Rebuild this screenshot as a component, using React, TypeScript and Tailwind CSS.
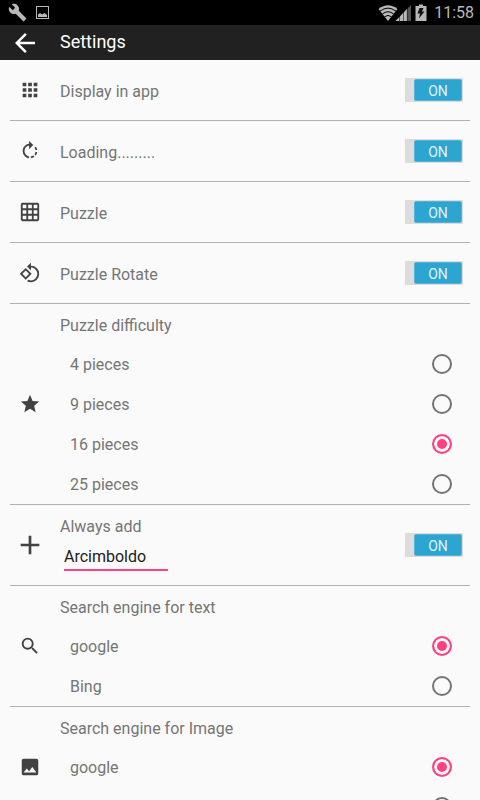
import { useState, type ReactNode } from "react";
import {
  MdAdd,
  MdApps,
  MdArrowBack,
  MdBuild,
  MdGridOn,
  MdImage,
  MdRotate90DegreesCcw,
  MdRotateRight,
  MdSearch,
  MdStar,
} from "react-icons/md";

function StatusBar() {
  return (
    <div className="flex h-[25px] shrink-0 items-center justify-between bg-black pl-2 pr-1.5 text-[#b8b8b8]">
      <div className="flex items-center gap-2">
        <MdBuild size={19} />
        <svg width="15" height="15" viewBox="0 0 15 15" aria-hidden="true">
          <rect x="1.5" y="1.5" width="12" height="12" fill="none" stroke="currentColor" />
          <path d="M3 12V9.500l2-1.500L7 9.500 9.500 8 12 10v2z" fill="currentColor" />
        </svg>
      </div>
      <div className="flex items-center gap-1.5">
        <svg width="50" height="18" viewBox="0 0 50 18" aria-hidden="true">
          <path d="M10 17 .5 5Q10-2.500 19.500 5z" fill="currentColor" />
          <g fill="none" stroke="#000" strokeWidth="1">
            <path d="M2 7.200Q10 1 18 7.200M4.300 10Q10 5.500 15.700 10M6.500 12.800Q10 10 13.500 12.800" />
          </g>
          <path d="M33 1v16H17.500z" fill="#555" />
          <path d="M29 5v12H17.500z" fill="currentColor" />
          <path d="M21.500 10v7M25.500 6v11M29.300 3v14" stroke="#000" strokeWidth=".5" />
          <path d="M41 .5h4V2h3.500v15h-11V2H41z" fill="currentColor" />
          <path d="M41.500 4h4l-1.500 3.500h2.500L41 14.500l1-5h-2.500z" fill="#111" />
        </svg>
        <span className="text-base leading-6">11:58</span>
      </div>
    </div>
  );
}

function Row({ icon, children }: { icon: ReactNode; children: ReactNode }) {
  return (
    <section className="mx-2.5 flex items-center border-b border-[#b2b2b2]">
      <div className="flex w-10 shrink-0 justify-center text-[#424242]">{icon}</div>
      <div className="min-w-0 flex-1 pl-2.5">{children}</div>
    </section>
  );
}

function Toggle({ label }: { label: string }) {
  const [on, setOn] = useState(true);
  return (
    <button
      type="button"
      role="switch"
      aria-checked={on}
      aria-label={label}
      onClick={() => setOn(!on)}
      className={`mr-[7px] flex h-6 w-[58px] shrink-0 bg-[#dcdcdc] p-px ${on ? "justify-end" : "justify-start"}`}
    >
      <span
        className={`flex h-[22px] w-12 items-center justify-center rounded-xs border pt-0.5 text-sm leading-5 ${
          on ? "border-[#55b4d5] bg-[#2ca5d0] text-[#e3f3f9]" : "border-[#999] bg-[#888] text-white"
        }`}
      >
        {on ? "ON" : "OFF"}
      </span>
    </button>
  );
}

function ToggleRow({ icon, label }: { icon: ReactNode; label: string }) {
  return (
    <Row icon={icon}>
      <div className="flex h-[60px] items-center justify-between">
        <span className="pt-1">{label}</span>
        <Toggle label={label} />
      </div>
    </Row>
  );
}

type ChoiceRowProps = {
  icon: ReactNode;
  title: string;
  name: string;
  options: string[];
  initial: string;
};

function ChoiceRow({ icon, title, name, options, initial }: ChoiceRowProps) {
  const [value, setValue] = useState(initial);
  return (
    <Row icon={icon}>
      <h2 className="h-10 pt-2.5">{title}</h2>
      <div role="radiogroup" aria-label={title}>
        {options.map((option) => (
          <label key={option} className="flex h-10 items-center justify-between pl-2.5 pr-[18px]">
            <span className="pt-0.5">{option}</span>
            <input
              type="radio"
              name={name}
              checked={value === option}
              onChange={() => setValue(option)}
              className="size-5 appearance-none rounded-full border-2 border-[#737373] checked:border-[#ff4081] checked:bg-[#ff4081] checked:shadow-[inset_0_0_0_3px_#fafafa]"
            />
          </label>
        ))}
      </div>
    </Row>
  );
}

export default function App() {
  const [word, setWord] = useState("Arcimboldo");
  return (
    <div className="flex h-screen flex-col bg-[#fafafa] font-[Roboto,sans-serif] text-base leading-6 text-[#757575]">
      <StatusBar />
      <header className="flex h-[35px] shrink-0 items-center bg-[#212121] text-white">
        <button type="button" aria-label="Back" className="flex w-[50px] justify-center">
          <MdArrowBack size={30} />
        </button>
        <h1 className="pb-0.5 pl-2.5 text-lg leading-6">Settings</h1>
      </header>
      <main className="flex-1 overflow-y-auto [scrollbar-width:none]">
        <ToggleRow icon={<MdApps size={22} />} label="Display in app" />
        <ToggleRow icon={<MdRotateRight size={22} />} label="Loading........." />
        <ToggleRow icon={<MdGridOn size={22} />} label="Puzzle" />
        <ToggleRow icon={<MdRotate90DegreesCcw size={22} />} label="Puzzle Rotate" />
        <ChoiceRow
          icon={<MdStar size={22} />}
          title="Puzzle difficulty"
          name="difficulty"
          options={["4 pieces", "9 pieces", "16 pieces", "25 pieces"]}
          initial="16 pieces"
        />
        <Row icon={<MdAdd size={32} />}>
          <div className="flex h-20 items-center justify-between">
            <div className="flex flex-col gap-1 pb-1">
              <label htmlFor="always-add">Always add</label>
              <input
                id="always-add"
                type="text"
                value={word}
                onChange={(e) => setWord(e.target.value)}
                className="ml-1 w-[104px] border-b-2 border-[#ff4081] pt-0.5 text-[#212121] outline-none"
              />
            </div>
            <Toggle label="Always add" />
          </div>
        </Row>
        <ChoiceRow
          icon={<MdSearch size={22} />}
          title="Search engine for text"
          name="text-engine"
          options={["google", "Bing"]}
          initial="google"
        />
        <ChoiceRow
          icon={<MdImage size={22} />}
          title="Search engine for Image"
          name="image-engine"
          options={["google", "Bing"]}
          initial="google"
        />
      </main>
    </div>
  );
}
